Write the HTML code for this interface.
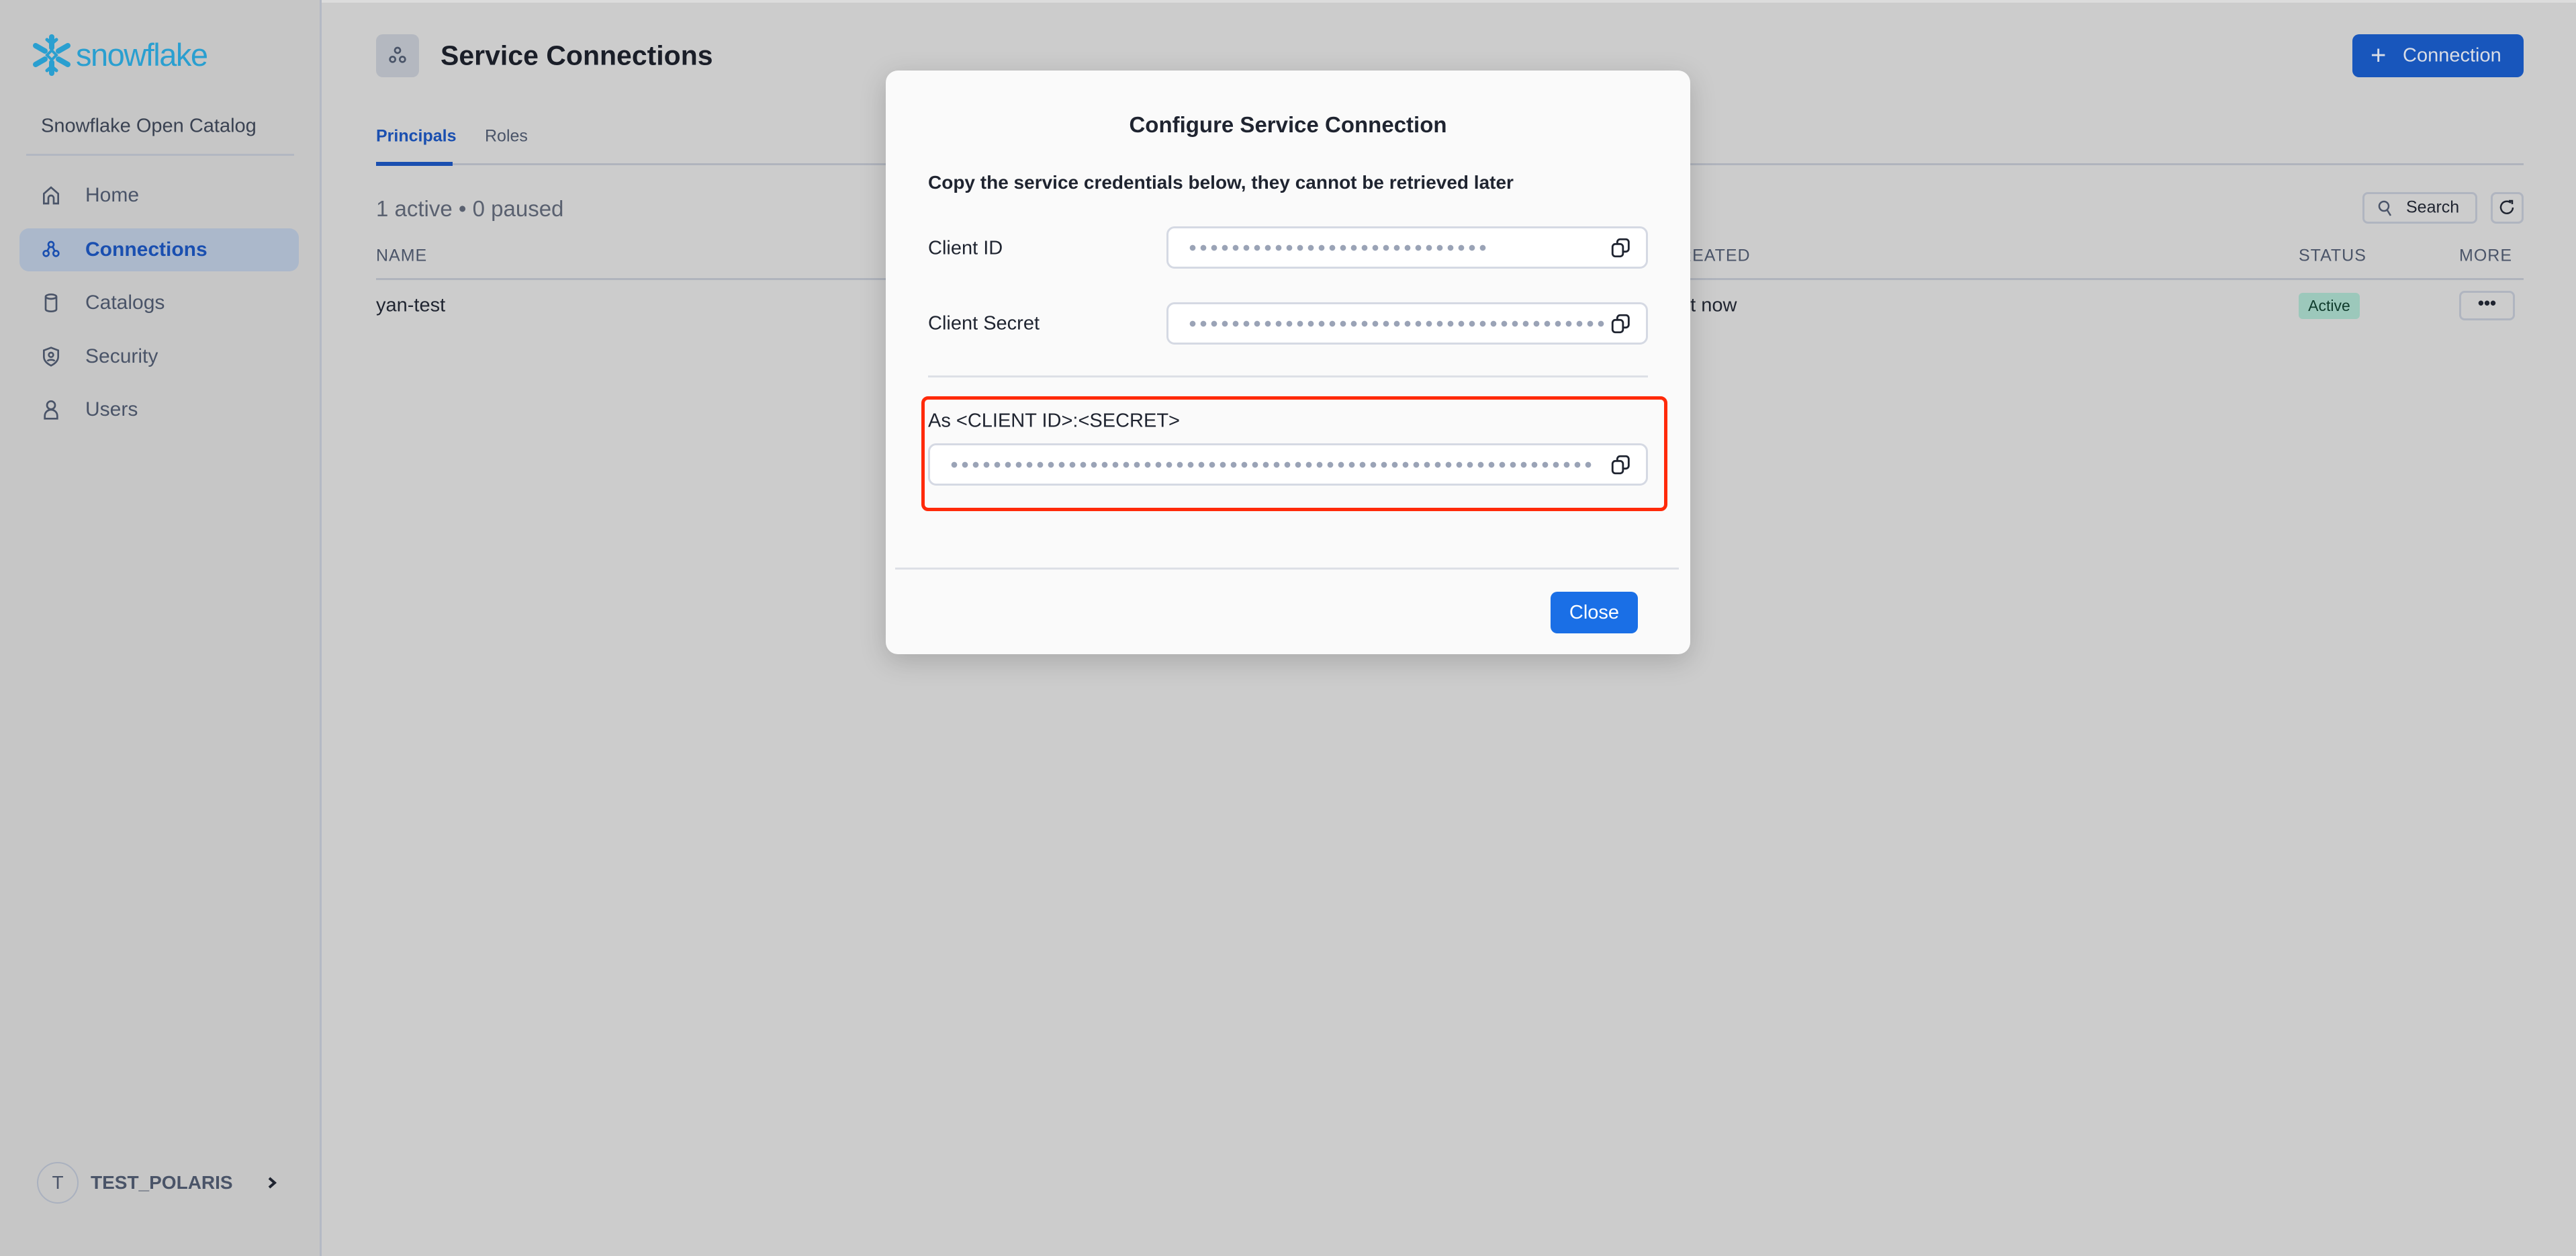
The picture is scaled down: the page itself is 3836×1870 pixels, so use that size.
<!DOCTYPE html>
<html><head><meta charset="utf-8"><style>
*{margin:0;padding:0;box-sizing:border-box}
body{width:3836px;height:1870px;position:relative;overflow:hidden;background:#cccccc;font-family:"Liberation Sans",sans-serif;color:#1f2430}
.a{position:absolute;white-space:nowrap}
.side{position:absolute;left:0;top:0;width:479px;height:1870px;background:#c6c6c6;border-right:3px solid #b4b9c4}
.nav{position:absolute;left:127px;font-size:30px;color:#4a5468;transform:translateY(-50%)}
.ico{position:absolute;left:60px;width:32px;height:32px;transform:translateY(-50%)}
.input{position:absolute;background:#fff;border:3px solid #d5d9e3;border-radius:12px}
.dots{position:absolute;top:50%;height:10px;margin-top:-5px;background:radial-gradient(circle,#9aa3b6 4px,transparent 4.6px) 0 0/16px 10px repeat-x}
.copy{position:absolute;right:20px;top:50%;margin-top:-17px;width:34px;height:34px}
.hdr{font-size:25px;color:#4a5468;letter-spacing:1px;transform:translateY(-50%)}
</style></head><body>
<div class="a" style="left:0;top:0;width:3836px;height:4px;background:#dcdcdc"></div>
<div class="side">
  <svg class="a" style="left:44px;top:49px" width="66" height="66" viewBox="0 0 66 66" stroke="#2a9fd0" stroke-width="8" stroke-linecap="round" fill="none">
    <path d="M33 6v16M33 44v16M9 19l14 8M43 39l14 8M9 47l14-8M43 27l14-8"/>
    <path d="M26 10l7 6 7-6M26 56l7-6 7 6" stroke-width="5"/>
    <rect x="28" y="28" width="10" height="10" transform="rotate(45 33 33)" stroke-width="4"/>
  </svg>
  <div class="a" style="left:113px;top:54px;font-size:47px;color:#2a9fd0;letter-spacing:-1.5px">snowflake</div>
  <div class="a" style="left:61px;top:188px;transform:translateY(-50%);font-size:29px;color:#3a4252">Snowflake Open Catalog</div>
  <div class="a" style="left:39px;top:229px;width:399px;height:3px;background:#b2b7c1"></div>
  <div class="a" style="left:29px;top:340px;width:416px;height:64px;background:#abb8cb;border-radius:14px"></div>
  <svg class="ico" style="top:291px" viewBox="0 0 24 24" fill="none" stroke="#4a5468" stroke-width="2"><path d="M4 21V10l8-7 8 7v11h-5v-6a3 3 0 0 0-6 0v6z"/></svg>
  <div class="nav" style="top:291px">Home</div>
  <svg class="ico" style="top:372px" viewBox="0 0 24 24" fill="none" stroke="#1a4fb0" stroke-width="2"><circle cx="12" cy="6" r="3"/><circle cx="6.5" cy="16" r="3"/><circle cx="17.5" cy="16" r="3"/><path d="M10 9l-2 4M14 9l2 4"/></svg>
  <div class="nav" style="top:372px;color:#1a4fb0;font-weight:bold">Connections</div>
  <svg class="ico" style="top:451px" viewBox="0 0 24 24" fill="none" stroke="#4a5468" stroke-width="2"><ellipse cx="12" cy="5" rx="6" ry="2.5"/><path d="M6 5v14c0 1.5 2.7 2.5 6 2.5s6-1 6-2.5V5"/></svg>
  <div class="nav" style="top:451px">Catalogs</div>
  <svg class="ico" style="top:531px" viewBox="0 0 24 24" fill="none" stroke="#4a5468" stroke-width="2"><path d="M12 2l8 3v7c0 5-4 8-8 10-4-2-8-5-8-10V5z"/><circle cx="12" cy="10" r="2.5"/><path d="M8 17c1-2 7-2 8 0"/></svg>
  <div class="nav" style="top:531px">Security</div>
  <svg class="ico" style="top:610px" viewBox="0 0 24 24" fill="none" stroke="#4a5468" stroke-width="2"><circle cx="12" cy="7" r="4.5"/><path d="M5 22v-3a7 7 0 0 1 14 0v3z"/></svg>
  <div class="nav" style="top:610px">Users</div>
  <div class="a" style="left:55px;top:1730px;width:62px;height:62px;border:2px solid #aab1bf;border-radius:50%;text-align:center;line-height:58px;font-size:28px;color:#4a5468">T</div>
  <div class="a" style="left:135px;top:1761px;transform:translateY(-50%);font-size:28px;font-weight:bold;color:#4a5468">TEST_POLARIS</div>
  <svg class="a" style="left:397px;top:1751px" width="18" height="20" viewBox="0 0 18 20" fill="none" stroke="#1f2430" stroke-width="4"><path d="M4 3l8 7-8 7"/></svg>
</div>

<div class="a" style="left:560px;top:51px;width:64px;height:64px;background:#b4b8c0;border-radius:10px"></div>
<svg class="a" style="left:576px;top:67px" width="32" height="32" viewBox="0 0 24 24" fill="none" stroke="#4a5468" stroke-width="2"><circle cx="12" cy="6" r="3"/><circle cx="6.5" cy="16" r="3"/><circle cx="17.5" cy="16" r="3"/></svg>
<div class="a" style="left:656px;top:83px;transform:translateY(-50%);font-size:41px;font-weight:bold;color:#1a1e28">Service Connections</div>
<div class="a" style="left:560px;top:203px;transform:translateY(-50%);font-size:25px;font-weight:bold;color:#1a4fb0">Principals</div>
<div class="a" style="left:722px;top:203px;transform:translateY(-50%);font-size:25px;color:#4a5468">Roles</div>
<div class="a" style="left:560px;top:243px;width:3198px;height:3px;background:#b0b4bd"></div>
<div class="a" style="left:560px;top:241px;width:114px;height:6px;background:#1a4fb0"></div>
<div class="a" style="left:560px;top:311px;transform:translateY(-50%);font-size:33px;color:#5a6170">1 active • 0 paused</div>
<div class="a hdr" style="left:560px;top:381px">NAME</div>
<div class="a hdr" style="left:2482px;top:381px">CREATED</div>
<div class="a hdr" style="left:3423px;top:381px">STATUS</div>
<div class="a hdr" style="left:3662px;top:381px">MORE</div>
<div class="a" style="left:560px;top:414px;width:3198px;height:3px;background:#b0b4bd"></div>
<div class="a" style="left:560px;top:455px;transform:translateY(-50%);font-size:29px;color:#1f2430">yan-test</div>
<div class="a" style="left:2472px;top:455px;transform:translateY(-50%);font-size:29px;color:#1f2430">Just now</div>
<div class="a" style="left:3423px;top:436px;width:91px;height:39px;background:#9cc8bb;border-radius:6px;font-size:23px;line-height:39px;text-align:center;color:#0f3b2c">Active</div>
<div class="a" style="left:3662px;top:433px;width:83px;height:44px;border:3px solid #b0b5c0;border-radius:8px;text-align:center;font-size:26px;line-height:30px;font-weight:bold;color:#1f2430">•••</div>
<div class="a" style="left:3503px;top:51px;width:255px;height:64px;background:#1856bc;border-radius:10px"></div>
<div class="a" style="left:3530px;top:83px;transform:translateY(-50%);font-size:40px;color:#d9dde6">+</div>
<div class="a" style="left:3578px;top:83px;transform:translateY(-50%);font-size:29px;color:#d9dde6">Connection</div>
<div class="a" style="left:3518px;top:286px;width:171px;height:47px;border:3px solid #b0b5c0;border-radius:8px"></div>
<svg class="a" style="left:3540px;top:297px" width="24" height="26" viewBox="0 0 24 26" fill="none" stroke="#4a5468" stroke-width="2.5"><circle cx="10" cy="10" r="7"/><path d="M15 16l5 8"/></svg>
<div class="a" style="left:3583px;top:309px;transform:translateY(-50%);font-size:25px;color:#1f2430">Search</div>
<div class="a" style="left:3709px;top:286px;width:49px;height:47px;border:3px solid #b0b5c0;border-radius:8px"></div>
<svg class="a" style="left:3720px;top:296px" width="26" height="28" viewBox="0 0 26 28" fill="none" stroke="#1f2430" stroke-width="2.5"><path d="M19 6a9 9 0 1 0 3 7"/><path d="M16 3h5v5"/></svg>

<!-- modal -->
<div class="a" style="left:1319px;top:105px;width:1198px;height:869px;background:#fafafa;border-radius:18px;box-shadow:0 10px 40px rgba(0,0,0,0.18)">
  <div class="a" style="left:0;width:1198px;top:81px;transform:translateY(-50%);text-align:center;font-size:33px;font-weight:bold;color:#1f2430">Configure Service Connection</div>
  <div class="a" style="left:63px;top:167px;transform:translateY(-50%);font-size:28px;font-weight:bold;color:#1f2430">Copy the service credentials below, they cannot be retrieved later</div>
  <div class="a" style="left:63px;top:265px;transform:translateY(-50%);font-size:29px;color:#1f2430">Client ID</div>
  <div class="input" style="left:418px;top:232px;width:717px;height:63px">
    <div class="dots" style="left:28px;width:448px"></div>
    <svg class="copy" viewBox="0 0 24 24" fill="none" stroke="#1f2430" stroke-width="2"><rect x="3" y="8" width="11" height="13" rx="3"/><path d="M8 8V6a3 3 0 0 1 3-3h6a3 3 0 0 1 3 3v7a3 3 0 0 1-3 3h-3"/></svg>
  </div>
  <div class="a" style="left:63px;top:377px;transform:translateY(-50%);font-size:29px;color:#1f2430">Client Secret</div>
  <div class="input" style="left:418px;top:345px;width:717px;height:63px">
    <div class="dots" style="left:28px;width:624px"></div>
    <svg class="copy" viewBox="0 0 24 24" fill="none" stroke="#1f2430" stroke-width="2"><rect x="3" y="8" width="11" height="13" rx="3"/><path d="M8 8V6a3 3 0 0 1 3-3h6a3 3 0 0 1 3 3v7a3 3 0 0 1-3 3h-3"/></svg>
  </div>
  <div class="a" style="left:63px;top:454px;width:1072px;height:3px;background:#dde0e6"></div>
  <div class="a" style="left:53px;top:485px;width:1111px;height:171px;border:5px solid #ff2a0a;border-radius:10px"></div>
  <div class="a" style="left:63px;top:522px;transform:translateY(-50%);font-size:29px;color:#1f2430">As &lt;CLIENT ID&gt;:&lt;SECRET&gt;</div>
  <div class="input" style="left:63px;top:555px;width:1072px;height:63px">
    <div class="dots" style="left:28px;width:960px"></div>
    <svg class="copy" viewBox="0 0 24 24" fill="none" stroke="#1f2430" stroke-width="2"><rect x="3" y="8" width="11" height="13" rx="3"/><path d="M8 8V6a3 3 0 0 1 3-3h6a3 3 0 0 1 3 3v7a3 3 0 0 1-3 3h-3"/></svg>
  </div>
  <div class="a" style="left:14px;top:740px;width:1167px;height:3px;background:#dde0e6"></div>
  <div class="a" style="left:990px;top:776px;width:130px;height:62px;background:#1a6fe6;border-radius:10px;color:#fff;font-size:29px;line-height:62px;text-align:center">Close</div>
</div>
</body></html>
